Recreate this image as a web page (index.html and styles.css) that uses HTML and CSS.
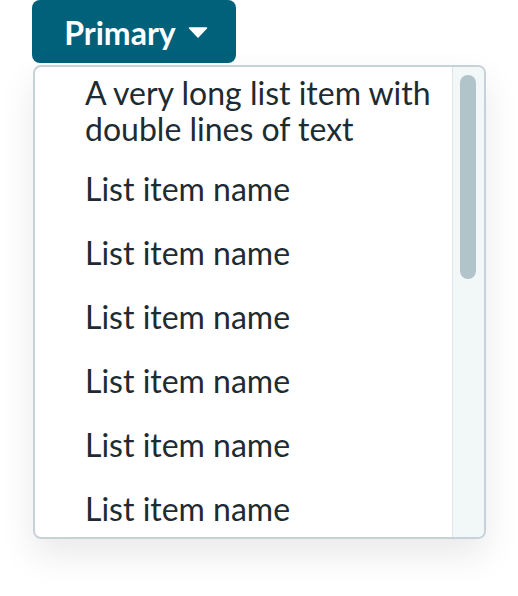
FILE: index.html
```html
<!DOCTYPE html>
<html>
<head>
<meta charset="utf-8">
<link rel="stylesheet" href="styles.css">
</head>
<body>
<div class="wrap">
  <button class="btn">Primary <svg class="caret" width="20" height="11" viewBox="0 0 20 11"><path d="M1.5 1 H18.5 L10 10 Z" fill="#fff" stroke="#fff" stroke-width="1.5" stroke-linejoin="round"/></svg></button>
  <div class="panel">
    <ul class="list">
      <li class="item item-multi">A very long list item with double lines of text</li>
      <li class="item">List item name</li>
      <li class="item">List item name</li>
      <li class="item">List item name</li>
      <li class="item">List item name</li>
      <li class="item">List item name</li>
      <li class="item">List item name</li>
    </ul>
    <div class="track"><div class="thumb"></div></div>
  </div>
</div>
</body>
</html>
```

FILE: styles.css
```css
html, body {
  margin: 0;
  padding: 0;
  background: #fff;
  font-family: Lato, "Open Sans", sans-serif;
}
body {
  min-height: 596px;
}
.wrap {
  padding: 0 0 60px 32px;
  display: flex;
  flex-direction: column;
  align-items: flex-start;
}
.btn {
  width: 204px;
  height: 63px;
  border: none;
  border-radius: 8px;
  background: #02617a;
  color: #fff;
  font-family: Lato, sans-serif;
  font-weight: 700;
  font-size: 32px;
  line-height: 38px;
  padding: 3px 0 0 4px;
  display: flex;
  align-items: center;
  justify-content: center;
  gap: 12px;
}
.caret {
  display: block;
  margin-top: -2px;
}
.panel {
  margin-top: 2px;
  margin-left: 1px;
  width: 449px;
  height: 470px;
  border: 2px solid #c6d2d7;
  border-radius: 8px;
  display: flex;
  overflow: hidden;
  box-shadow: 0 16px 36px rgba(0, 0, 0, 0.09);
}
.list {
  flex: 1;
  margin: 0;
  padding: 0;
  list-style: none;
  overflow: hidden;
}
.item {
  padding: 13px 20px 13px 50px;
  font-size: 32px;
  line-height: 38px;
  color: #1d2b32;
}
.item-multi {
  line-height: 36px;
  padding-top: 8px;
  padding-bottom: 10px;
}
.track {
  border-left: 1px solid #dde7ea;
  background: #f2f7f8;
  padding: 8px 7px 0 7px;
  box-sizing: border-box;
  width: 32px;
  flex: none;
}
.thumb {
  width: 16px;
  height: 204px;
  border-radius: 8px;
  background: #b1c4ca;
}
```
